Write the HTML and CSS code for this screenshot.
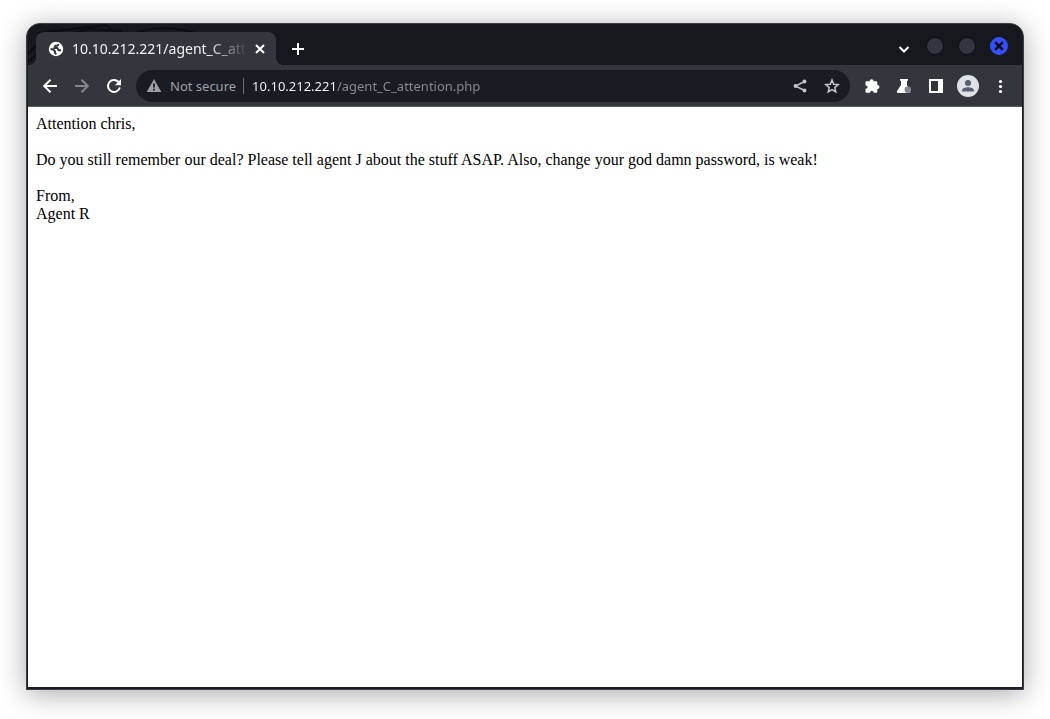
FILE: index.html
```html
<!DOCTYPE html>
<html lang="en">
<head>
<meta charset="utf-8">
<meta name="viewport" content="width=device-width, initial-scale=1">
<title>10.10.212.221/agent_C_attention.php</title>
<link rel="stylesheet" href="styles.css">
</head>
<body>
<div class="window">
  <header class="titlebar">
    <svg class="wallpaper" viewBox="0 0 220 42" aria-hidden="true">
      <path d="M0 30 14 16 62 5 92 7 100 14M10 9 78 1 88 10M0 38 10 29 38 12M100 12C125 1 150 2 180 13" />
    </svg>
    <div class="tab">
      <svg class="icon16" viewBox="0 0 16 16" aria-hidden="true">
        <circle cx="8" cy="8" r="7.200" fill="#fff"/>
        <path fill="none" stroke="#33363d" stroke-width="1.900" stroke-linejoin="round" d="M10.800 3.200 9.300 4.800H7.200L6.300 7h3.200l1 2.300h2.600M2.500 8.300h2.300L7 10.300v1.500l1.300 1.500"/>
      </svg>
      <span class="tab-title">10.10.212.221/agent_C_att</span>
      <button class="tab-close" aria-label="Close tab"><svg class="icon16" viewBox="0 0 16 16"><path class="line" d="m4 4 8 8m0-8-8 8"/></svg></button>
    </div>
    <button class="new-tab" aria-label="New tab"><svg class="icon16" viewBox="0 0 16 16"><path class="line" d="M8 2v12M2 8h12"/></svg></button>
    <div class="window-controls">
      <button class="search-tabs" aria-label="Search tabs"><svg class="icon16" viewBox="0 0 16 16"><path class="line" d="m3.500 6 4.500 4.500L12.500 6"/></svg></button>
      <button class="dot" aria-label="Minimize"></button>
      <button class="dot" aria-label="Maximize"></button>
      <button class="dot dot-close" aria-label="Close window"><svg class="icon16" viewBox="0 0 16 16"><path fill="none" stroke="#090a12" stroke-width="2.400" d="m4.200 4.200 7.600 7.600m0-7.600-7.600 7.600"/></svg></button>
    </div>
  </header>
  <nav class="toolbar" aria-label="Browser toolbar">
    <button class="tool" aria-label="Back"><svg class="icon16" viewBox="0 0 16 16"><path class="line" d="M15 8H2m6.500-6.300L2.200 8l6.300 6.300"/></svg></button>
    <button class="tool muted" aria-label="Forward" disabled><svg class="icon16" viewBox="0 0 16 16"><path class="line" d="M1 8h13M7.500 1.700 13.800 8l-6.300 6.300"/></svg></button>
    <button class="tool" aria-label="Reload"><svg class="icon16" viewBox="0 0 16 16"><path class="line" d="M13.800 9.500A6 6 0 1 1 12.300 3.800"/><path d="M15 1v6.200H8.800Z" fill="currentColor"/></svg></button>
    <div class="omnibox">
      <button class="security"><svg class="icon16" viewBox="0 0 16 16" aria-hidden="true"><path fill="currentColor" fill-rule="evenodd" d="M8 1 15.300 14H.7ZM7.100 5.500v4h1.800v-4Zm0 5.300v1.700h1.800v-1.700Z"/></svg>Not secure</button>
      <input class="url" type="text" aria-label="Address" value="10.10.212.221/agent_C_attention.php" spellcheck="false">
      <button class="tool field-tool" aria-label="Share"><svg class="icon16" viewBox="0 0 16 16"><path d="M12.500 3.500 3.500 8l9 4.500" fill="none" stroke="currentColor" stroke-width="1.400"/><g fill="currentColor"><circle cx="12.500" cy="3.500" r="1.900"/><circle cx="3.500" cy="8" r="1.900"/><circle cx="12.500" cy="12.500" r="1.900"/></g></svg></button>
      <button class="tool field-tool" aria-label="Bookmark this page"><svg class="icon16" viewBox="0 0 16 16"><path d="m8 2 1.700 4.200 4.500.4-3.400 3 1 4.400L8 11.700 4.200 14l1-4.400-3.400-3 4.500-.4Z" fill="none" stroke="currentColor" stroke-width="1.500"/></svg></button>
    </div>
    <button class="tool" aria-label="Extensions"><svg class="icon16" viewBox="0 0 16 16"><path fill="currentColor" d="M5.600 3.200a2 2 0 0 1 4 0H12c.8 0 1.300.5 1.300 1.300V6.900h.2a2 2 0 0 1 0 4h-.2V13.500c0 .8-.5 1.300-1.300 1.300H9.600V14.500a1.700 1.700 0 0 0-3.400 0V14.800H2.800c-.8 0-1.300-.5-1.300-1.300V10.800h.4a1.700 1.700 0 0 0 0-3.400H1.500V4.500c0-.8.500-1.300 1.300-1.300Z"/></svg></button>
    <button class="tool" aria-label="Search labs"><svg class="icon16" viewBox="0 0 16 16"><path fill="currentColor" d="M4 1h8v1.800h-1V7l3 6c.4 1 0 2-1 2H2c-1 0-1.400-1-1-2l4-6V2.800H4Z"/><circle cx="11.800" cy="11.800" r="3.300" fill="#80868b"/></svg></button>
    <button class="tool" aria-label="Side panel"><svg class="icon16" viewBox="0 0 16 16"><path fill="currentColor" fill-rule="evenodd" d="M1 1h14v14H1Zm2 2v10h7V3Z"/></svg></button>
    <button class="tool" aria-label="Profile"><svg class="avatar" viewBox="0 0 22 22"><circle cx="11" cy="11" r="11" fill="#dee1e6"/><g fill="#566073"><circle cx="11" cy="8" r="3"/><path d="M5 16.500v-1c0-2.200 3.500-3.300 6-3.300s6 1.100 6 3.300v1Z"/></g></svg></button>
    <button class="tool" aria-label="Menu"><svg class="icon16" viewBox="0 0 16 16"><g fill="currentColor"><circle cx="8.500" cy="3.500" r="1.600"/><circle cx="8.500" cy="8.500" r="1.600"/><circle cx="8.500" cy="13.500" r="1.600"/></g></svg></button>
  </nav>
  <main class="page">
    <p>Attention chris,</p>
    <p>Do you still remember our deal? Please tell agent J about the stuff ASAP. Also, change your god damn password, is weak!</p>
    <p>From,<br>Agent R</p>
  </main>
</div>
</body>
</html>
```
FILE: styles.css
```css
* { box-sizing: border-box; }

body {
  display: flex;
  min-height: 100vh;
  margin: 0;
  padding: 23px 26px 29px;
  background: #fff;
}

button {
  display: flex;
  align-items: center;
  justify-content: center;
  flex: none;
  padding: 0;
  border: 0;
  background: none;
  color: #fff;
  font-family: "Noto Sans", sans-serif;
}

svg { display: block; flex: none; }
.icon16 { width: 16px; height: 16px; }
.line { fill: none; stroke: currentColor; stroke-width: 2; }

.window {
  display: flex;
  flex-direction: column;
  flex: 1;
  min-width: 0;
  padding: 0 1px 2px;
  border: 1px solid #3c3c46;
  border-radius: 14px 14px 0 0;
  background: #1c1c26;
  box-shadow: 0 4px 28px rgba(0, 0, 0, 0.34);
}

.titlebar {
  position: relative;
  display: flex;
  align-items: flex-end;
  height: 41px;
  padding: 0 14px 0 8px;
  border-radius: 12px 12px 0 0;
  background: #17181d;
  overflow: hidden;
}

.wallpaper {
  position: absolute;
  top: 0;
  left: 0;
  width: 220px;
  height: 42px;
  fill: none;
  stroke: #0c0d10;
  stroke-width: 2;
}

.tab {
  position: relative;
  display: flex;
  align-items: center;
  width: 240px;
  height: 33px;
  padding: 0 8px 0 12px;
  border-radius: 8px 8px 0 0;
  background: #33363d;
}

.tab::before,
.tab::after {
  content: "";
  position: absolute;
  bottom: 0;
  width: 8px;
  height: 8px;
}
.tab::before { right: 100%; background: radial-gradient(circle at 0 0, transparent 8px, #33363d 8px); }
.tab::after { left: 100%; background: radial-gradient(circle at 100% 0, transparent 8px, #33363d 8px); }

.tab-title {
  flex: 1;
  margin-left: 8px;
  overflow: hidden;
  color: #f1f3f4;
  font: 14px/20px "Noto Sans", sans-serif;
  white-space: nowrap;
  mask-image: linear-gradient(to left, transparent, #000 40px);
}

.tab-close { width: 16px; height: 16px; margin-left: 4px; }
.new-tab { width: 28px; height: 33px; margin-left: 8px; }

.window-controls {
  display: flex;
  align-items: center;
  gap: 14px;
  height: 41px;
  margin-left: auto;
  padding-top: 3px;
}
.search-tabs { height: 20px; padding-top: 5px; }
.dot {
  width: 18px;
  height: 18px;
  border: 1px solid #0d0d12;
  border-radius: 50%;
  background: #353441;
}
.dot-close { border-color: #3350f5; background: #3350ff; }

.toolbar {
  display: flex;
  align-items: center;
  height: 42px;
  padding: 0 6px;
  border-bottom: 1px solid #5a5b61;
  background: #33363d;
}
.tool { width: 32px; height: 32px; }
.muted { color: #86878c; }

.omnibox {
  display: flex;
  align-items: center;
  flex: 1;
  min-width: 0;
  height: 32px;
  margin: 0 6px;
  padding: 0 2px 0 10px;
  border-radius: 16px;
  background: #1b1b24;
}
.security {
  gap: 8px;
  height: 16px;
  padding-right: 7px;
  border-right: 1px solid #6c7077;
  color: #9aa0a6;
  font-size: 13px;
}
.url {
  flex: 1;
  min-width: 0;
  height: 24px;
  padding: 0 0 0 8px;
  border: 0;
  outline: 0;
  background: linear-gradient(to right, #fff 92px, #8b8c91 92px);
  background-clip: text;
  color: transparent;
  font: 13px/24px "Noto Sans", sans-serif;
}
.field-tool { color: #c4c6ca; }
.avatar { width: 22px; height: 22px; }

.page {
  flex: 1;
  padding: 8px;
  background: #fff;
  color: #000;
  font: 16px/18px "Liberation Serif", "Times New Roman", serif;
}
.page p { margin: 0 0 18px; }
```
